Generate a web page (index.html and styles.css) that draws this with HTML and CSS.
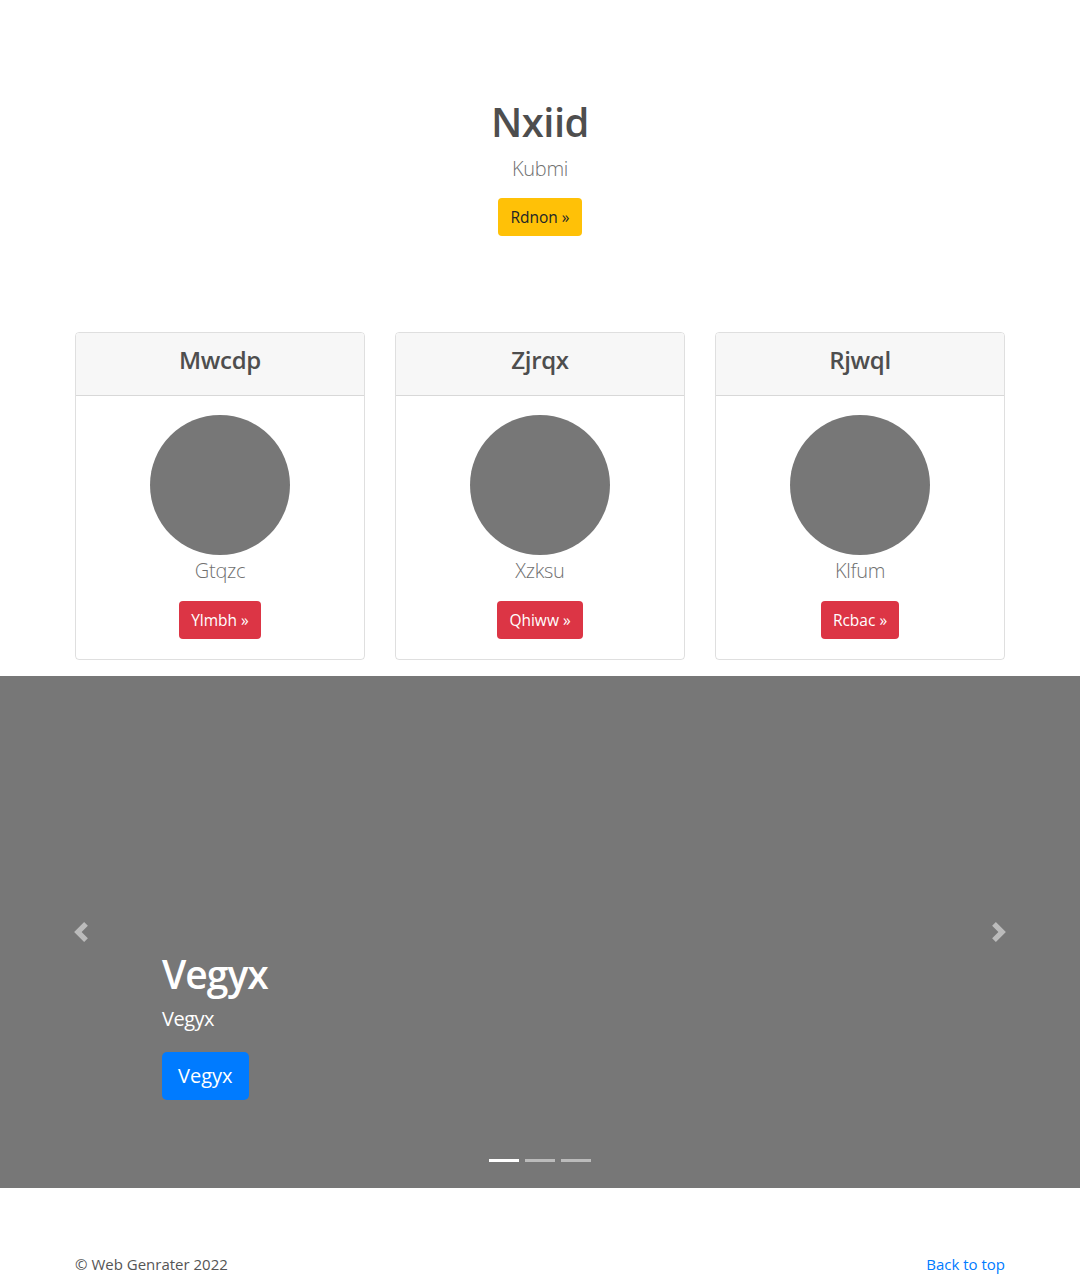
FILE: index.html
```html
<!DOCTYPE html>
<html>
<head>
<meta charset="utf-8">
<link rel="stylesheet" href="styles.css">
</head>
<body>
<section class="hero">
  <h1 class="hero-title">Nxiid</h1>
  <p class="lead">Kubmi</p>
  <a class="btn btn-warning" href="#">Rdnon »</a>
</section>

<section class="container cards">
  <div class="card">
    <div class="card-header"><h4>Mwcdp</h4></div>
    <div class="card-body">
      <div class="avatar"></div>
      <p class="lead">Gtqzc</p>
      <a class="btn btn-danger" href="#">Ylmbh »</a>
    </div>
  </div>
  <div class="card">
    <div class="card-header"><h4>Zjrqx</h4></div>
    <div class="card-body">
      <div class="avatar"></div>
      <p class="lead">Xzksu</p>
      <a class="btn btn-danger" href="#">Qhiww »</a>
    </div>
  </div>
  <div class="card">
    <div class="card-header"><h4>Rjwql</h4></div>
    <div class="card-body">
      <div class="avatar"></div>
      <p class="lead">Klfum</p>
      <a class="btn btn-danger" href="#">Rcbac »</a>
    </div>
  </div>
</section>

<section class="carousel">
  <a class="control prev" href="#"><svg width="20" height="20" viewBox="0 0 8 8"><path fill="#fff" d="M5.25 0l-4 4 4 4 1.5-1.5-2.5-2.5 2.5-2.5-1.5-1.5z"/></svg></a>
  <div class="caption">
    <h1>Vegyx</h1>
    <p>Vegyx</p>
    <a class="btn btn-primary btn-lg" href="#">Vegyx</a>
  </div>
  <a class="control next" href="#"><svg width="20" height="20" viewBox="0 0 8 8"><path fill="#fff" d="M2.75 0l-1.5 1.5 2.5 2.5-2.5 2.5 1.5 1.5 4-4-4-4z"/></svg></a>
  <ol class="indicators">
    <li class="active"></li>
    <li></li>
    <li></li>
  </ol>
</section>

<footer class="container footer">
  <p>© Web Genrater 2022</p>
  <a href="#">Back to top</a>
</footer>
</body>
</html>
```

FILE: styles.css
```css
* { box-sizing: border-box; }
html, body { margin: 0; padding: 0; }
body {
  font-family: "Open Sans", "Noto Sans", sans-serif;
  font-size: 16px;
  line-height: 1.5;
  color: #555;
  background: #fff;
}
h1, h4, p { margin: 0; }
a { text-decoration: none; }

.hero {
  display: flex;
  flex-direction: column;
  align-items: center;
  padding: 98px 0 96px;
}
.hero-title {
  font-size: 40px;
  font-weight: 600;
  line-height: 1.2;
  color: #4e4e4e;
  letter-spacing: -0.5px;
}
.lead {
  font-size: 20px;
  font-weight: 300;
  color: #707070;
}
.hero .lead { margin-top: 8px; margin-bottom: 14px; letter-spacing: -0.3px; }

.btn {
  display: inline-block;
  padding: 6px 12px;
  font-size: 15.5px;
  line-height: 26px;
  border-radius: 4px;
}
.btn-warning { background: #ffc107; color: #212529; }
.btn-danger { background: #dc3545; color: #fff; }
.btn-primary { background: #007bff; color: #fff; }
.btn-lg { padding: 8px 16px; font-size: 20px; line-height: 32px; border-radius: 5px; }

.container {
  width: 930px;
  margin: 0 auto;
}
.cards {
  display: grid;
  grid-template-columns: repeat(3, 290px);
  column-gap: 30px;
  padding-bottom: 16px;
}
.card {
  border: 1px solid rgba(0,0,0,.125);
  border-radius: 4px;
  overflow: hidden;
}
.card-header {
  background: #f7f7f7;
  border-bottom: 1px solid rgba(0,0,0,.125);
  height: 63px;
  display: flex;
  align-items: center;
  justify-content: center;
  padding-bottom: 8px;
}
.card-header h4 {
  font-size: 24px;
  font-weight: 600;
  color: #4e4e4e;
  letter-spacing: -0.3px;
}
.card-body {
  display: flex;
  flex-direction: column;
  align-items: center;
  padding: 19px 20px 20px;
}
.avatar {
  width: 140px;
  height: 140px;
  border-radius: 50%;
  background: #777;
}
.card-body .lead { margin-top: 1px; margin-bottom: 15px; line-height: 30px; letter-spacing: -0.3px; }

.carousel {
  position: relative;
  height: 512px;
  background: #777;
}
.control {
  position: absolute;
  top: 0;
  bottom: 0;
  width: 162px;
  display: flex;
  align-items: center;
  justify-content: center;
  opacity: .5;
}
.control.prev { left: 0; }
.control.next { right: 0; }
.caption {
  position: absolute;
  left: 162px;
  right: 162px;
  bottom: 88px;
  color: #fff;
}
.caption h1 {
  font-size: 39px;
  font-weight: 600;
  line-height: 1.2;
  letter-spacing: -1px;
}
.caption p {
  font-size: 20px;
  font-weight: 500;
  margin-top: 6px;
  margin-bottom: 18px;
  letter-spacing: -0.5px;
}
.indicators {
  position: absolute;
  left: 0;
  right: 0;
  bottom: 26px;
  margin: 0;
  padding: 0;
  list-style: none;
  display: flex;
  justify-content: center;
  gap: 6px;
}
.indicators li {
  width: 30px;
  height: 3px;
  background: #fff;
  opacity: .5;
}
.indicators li.active { opacity: 1; }

.footer {
  display: flex;
  justify-content: space-between;
  padding: 65px 0 0;
  font-size: 15px;
}
.footer a { color: #007bff; }
```
